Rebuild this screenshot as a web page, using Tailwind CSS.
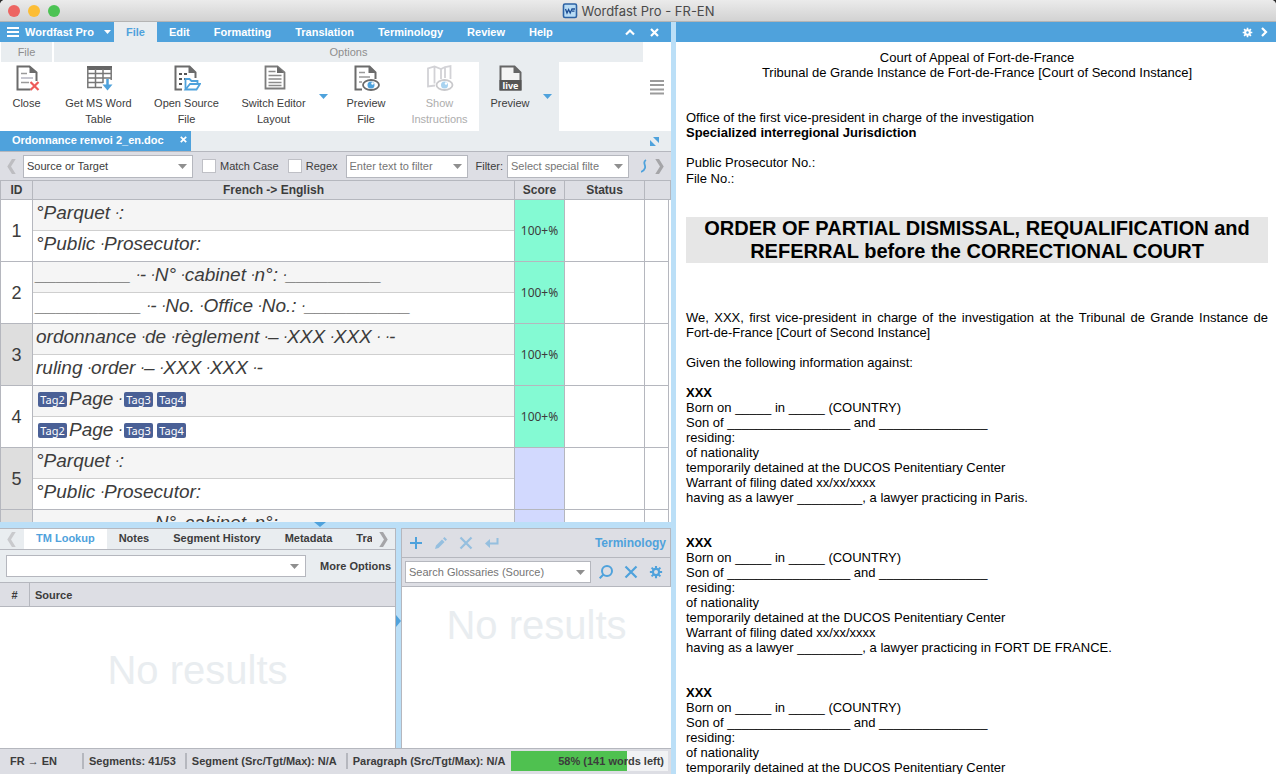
<!DOCTYPE html>
<html lang="en">
<head>
    <meta charset="UTF-8">
    <meta name="viewport" content="width=device-width, initial-scale=1.0">
    <title>Wordfast Pro - FR-EN</title>
    <script src="https://cdn.jsdelivr.net/npm/@tailwindcss/browser@4"></script>
</head>
<body class="bg-[#2b2b2b] font-['Liberation_Sans',Arial,sans-serif] text-[11px] leading-4 text-[#3c3c3c]">

    <!-- Shared shapes -->
    <svg class="hidden">
        <symbol id="arrow" viewBox="0 0 9 5"><path d="M0 0h9L4.500 5z" fill="currentColor"/></symbol>
        <symbol id="left" viewBox="0 0 9 16"><path d="M5 0h4L4 8l5 8H5L0 8z" fill="currentColor"/></symbol>
        <symbol id="right" viewBox="0 0 9 16"><path d="M4 0H0l5 8-5 8h4l5-8z" fill="currentColor"/></symbol>
        <symbol id="cross" viewBox="0 0 14 14"><path d="M1.500 1.500l11 11M12.500 1.500l-11 11" fill="none" stroke="currentColor" stroke-width="2.200"/></symbol>
        <symbol id="boldcross" viewBox="0 0 9 9"><path d="M1 1l7 7M8 1L1 8" fill="none" stroke="currentColor" stroke-width="2.200"/></symbol>
        <symbol id="gear" viewBox="0 0 16 16">
            <path d="M8 1v14M1 8h14M3 3l10 10M13 3L3 13" stroke="currentColor" stroke-width="2.400"/>
            <circle cx="8" cy="8" r="4.800" fill="currentColor"/>
        </symbol>
    </svg>

    <div class="flex h-screen flex-col overflow-hidden rounded-t-[5px] bg-white">

        <!-- Title bar -->
        <header class="relative flex h-[22px] shrink-0 items-center justify-center border-b border-[#b4b4b4] bg-linear-to-b from-[#ebebeb] to-[#d2d2d2]">
            <div class="absolute left-2 flex gap-2">
                <span class="size-3 rounded-full bg-[#ed6562]"></span>
                <span class="size-3 rounded-full bg-[#fcbd35]"></span>
                <span class="size-3 rounded-full bg-[#4cc354]"></span>
            </div>
            <svg class="mr-1 size-4" viewBox="0 0 16 16">
                <rect x="1.500" y="1" width="13" height="13.500" rx="1.500" fill="#b9dcf5" stroke="#2c62a4" stroke-width="1.600"/>
                <path d="M3.500 6l1.500 4 1.600-3.500L8.200 10 10 6h3M10 8.200h2.500" fill="none" stroke="#1e4e94" stroke-width="1.300"/>
            </svg>
            <h1 class="font-[Inter,sans-serif] text-[13px] text-[#4a4a4a]">Wordfast Pro - FR-EN</h1>
        </header>

        <main class="grid min-h-0 flex-1 grid-cols-[minmax(0,671fr)_5px_minmax(0,600fr)]">

            <!-- Editor side -->
            <div class="flex min-h-0 flex-col">

                <!-- Menu -->
                <nav class="flex h-5 shrink-0 items-stretch bg-[#4fa2dc] font-bold text-white">
                    <button class="flex w-[114px] items-center gap-[6px] pl-[7px] font-bold">
                        <svg class="h-[10px] w-3" viewBox="0 0 12 10"><path d="M0 1h12M0 5h12M0 9h12" stroke="#fff" stroke-width="2"/></svg>
                        Wordfast Pro
                        <svg class="ml-1 h-[4px] w-[7px]"><use href="#arrow"/></svg>
                    </button>
                    <button class="bg-[#e9edf0] px-3 font-bold text-[#4fa2dc]">File</button>
                    <button class="px-3 font-bold">Edit</button>
                    <button class="px-3 font-bold">Formatting</button>
                    <button class="px-3 font-bold">Translation</button>
                    <button class="px-3 font-bold">Terminology</button>
                    <button class="px-3 font-bold">Review</button>
                    <button class="px-3 font-bold">Help</button>
                    <button class="ml-auto" aria-label="Collapse ribbon">
                        <svg class="h-2 w-[10px]" viewBox="0 0 10 8"><path d="M1 6.500l4-4 4 4" fill="none" stroke="#fff" stroke-width="2.200"/></svg>
                    </button>
                    <button class="mr-3 ml-[15px]" aria-label="Close ribbon"><svg class="size-[9px]"><use href="#boldcross"/></svg></button>
                </nav>

                <!-- Ribbon -->
                <div class="flex h-[89px] shrink-0 justify-between">
                    <div class="flex h-full">
                        <section class="flex w-[54px] flex-col border-l border-white">
                            <h2 class="mr-[2px] h-5 bg-[#e9edf0] text-center leading-5 text-[#8e8e8e]">File</h2>
                            <button class="flex flex-1 flex-col items-center pt-[2px] pr-[2px]">
                                <svg class="mb-[3px] size-7" viewBox="0 0 28 28" fill="none">
                                    <path d="M17.500 25.500H4.500v-23h12l7 6V17" stroke="#6b6b6b" stroke-width="2"/>
                                    <path d="M16.500 2v7h7z" fill="#6b6b6b"/>
                                    <path d="M8 9.500h6M8 18.500h8" stroke="#9a9a9a" stroke-width="1.500"/>
                                    <path d="M8 14h12" stroke="#b5b5c0" stroke-width="1.500"/>
                                    <path d="M17.500 18l8 8M25.500 18l-8 8" stroke="#ee5b59" stroke-width="2.200"/>
                                </svg>
                                Close
                            </button>
                        </section>
                        <section class="flex flex-col">
                            <h2 class="h-5 bg-[#e9edf0] text-center leading-5 text-[#8e8e8e]">Options</h2>
                            <div class="flex flex-1 pr-[84px]">
                                <button class="flex w-[89px] flex-col items-center pt-[2px]">
                                    <svg class="mb-[3px] size-7" viewBox="0 0 28 28" fill="none">
                                        <path d="M2 4h25" stroke="#666" stroke-width="4"/>
                                        <path d="M2.800 4v19.500H17M26.200 4v12M10.500 5v18M18 5v14M3 9.500h23M3 14h23M3 18.500h15" stroke="#777" stroke-width="1.500"/>
                                        <path d="M22.500 15v8" stroke="#4fa2dc" stroke-width="2.500"/>
                                        <path d="M17.500 20.500h10l-5 6z" fill="#4fa2dc"/>
                                    </svg>
                                    Get MS Word<br>Table
                                </button>
                                <button class="flex w-[87px] flex-col items-center pt-[2px]">
                                    <svg class="mb-[3px] size-7" viewBox="0 0 28 28" fill="none">
                                        <path d="M9 25.500H2.500v-23h14l6 6V14" stroke="#6b6b6b" stroke-width="2"/>
                                        <path d="M15.500 2v7h7z" fill="#6b6b6b"/>
                                        <path d="M6 10h3M11 10h3M6 15h3M6 20h3M11 15h2" stroke="#555" stroke-width="1.800"/>
                                        <path d="M12.500 25.500V15h4l2 2h6v3" stroke="#4fa2dc" stroke-width="1.800"/>
                                        <path d="M12.500 25.500l4.500-5.500h10l-3.500 5.500z" fill="#fff" stroke="#4fa2dc" stroke-width="1.800"/>
                                    </svg>
                                    Open Source<br>File
                                </button>
                                <button class="flex w-[87px] flex-col items-center pt-[2px]">
                                    <svg class="mb-[3px] size-7" viewBox="0 0 28 28" fill="none">
                                        <path d="M5.500 24.500v-22h12l7 6v16z" stroke="#7c7c7c" stroke-width="1.800"/>
                                        <path d="M17 2v7h7z" fill="#6b6b6b"/>
                                        <path d="M8.500 7.500h7M8.500 11.500h13M8.500 15h13M8.500 18.500h13M8.500 21.500h13" stroke="#8b8b8b" stroke-width="1.500"/>
                                    </svg>
                                    Switch Editor<br>Layout
                                </button>
                                <button class="w-3" aria-label="More layouts"><svg class="mx-auto h-[5px] w-[9px] text-[#4fa2dc]"><use href="#arrow"/></svg></button>
                                <button class="flex w-[74px] flex-col items-center pt-[2px]">
                                    <svg class="mb-[3px] size-7" viewBox="0 0 28 28" fill="none">
                                        <path d="M10 25.500H3.500v-23h14l6 6V15" stroke="#6b6b6b" stroke-width="2"/>
                                        <path d="M16.500 2v7h7z" fill="#6b6b6b"/>
                                        <path d="M7 8.500h6M7 13h11M7 18h3" stroke="#9a9a9a" stroke-width="1.500"/>
                                        <ellipse cx="19" cy="21" rx="8" ry="5" fill="#fff" stroke="#6b6b6b" stroke-width="1.800"/>
                                        <circle cx="19" cy="21" r="3.500" fill="#4fa2dc"/><circle cx="20.500" cy="19.500" r="1.200" fill="#fff"/>
                                    </svg>
                                    Preview<br>File
                                </button>
                                <button class="flex w-[73px] flex-col items-center pt-[2px] text-[#adadad]" disabled>
                                    <svg class="mb-[3px] size-7" viewBox="0 0 28 28" fill="none">
                                        <path d="M9 21.500l-7 1v-18L8.500 2.500 15 5l4-2 5.500-1V15M8.500 2.500v17M15 5v10M19 3v11" stroke="#d2d2d6" stroke-width="1.800"/>
                                        <ellipse cx="18.500" cy="21" rx="8" ry="5" fill="#fff" stroke="#c9c9cc" stroke-width="1.800"/>
                                        <circle cx="18.500" cy="21" r="3.500" fill="#a9d3f0"/><circle cx="20" cy="19.500" r="1.200" fill="#fff"/>
                                    </svg>
                                    Show<br>Instructions
                                </button>
                                <div class="ml-[3px] flex w-20 bg-[#e9edf0]">
                                    <button class="flex w-[62px] flex-col items-center pt-[2px]">
                                        <svg class="mb-[3px] size-7" viewBox="0 0 28 28" fill="none">
                                            <path d="M4.500 25.500v-23h14l6 6v17z" fill="#f4f4f4" stroke="#666" stroke-width="2"/>
                                            <path d="M17.500 2v7h7z" fill="#666"/>
                                            <path d="M3.500 16h22v10.500h-22z" fill="#555"/>
                                            <text x="14.500" y="24.500" text-anchor="middle" fill="#fff" font-family="Noto Sans" font-size="9" font-weight="bold">live</text>
                                        </svg>
                                        Preview
                                    </button>
                                    <button class="w-3" aria-label="More previews"><svg class="mx-auto h-[5px] w-[9px] text-[#4fa2dc]"><use href="#arrow"/></svg></button>
                                </div>
                            </div>
                        </section>
                    </div>
                    <button class="mt-5 mr-[7px] self-start pt-[18px]" aria-label="Customize">
                        <svg class="h-[15px] w-[14px]" viewBox="0 0 14 15"><path d="M0 1h14M0 5h14M0 9.500h14M0 13.500h14" stroke="#9b9b9b" stroke-width="1.800"/></svg>
                    </button>
                </div>

                <!-- Open files -->
                <div class="flex h-5 shrink-0 items-center justify-between bg-[#e9edf0] pr-3">
                    <div class="flex h-full w-[191px] items-start justify-between bg-[#4fa2dc] pt-px pr-1 pl-3 font-bold text-white">
                        <span>Ordonnance renvoi 2_en.doc</span>
                        <button class="pt-[4px]" aria-label="Close file"><svg class="size-[7px]"><use href="#boldcross"/></svg></button>
                    </div>
                    <button aria-label="Expand">
                        <svg class="size-[9px]" viewBox="0 0 9 9" fill="#4fa2dc"><path d="M3 0h6v6zM0 3l6 6H0z"/></svg>
                    </button>
                </div>

                <!-- Filter bar -->
                <div class="flex h-[29px] shrink-0 items-center border-t border-[#b5b7be] bg-[#dddee4] pr-[7px] pl-[7px]">
                    <button class="mr-[7px] text-[#bdbdc1]" aria-label="Scroll left"><svg class="h-[15px] w-[9px]"><use href="#left"/></svg></button>
                    <div class="relative flex w-[170px] items-center">
                        <select aria-label="Search in" class="h-[23px] w-full appearance-none border border-[#b5b7be] bg-white pr-5 pl-[3px]"><option>Source or Target</option></select>
                        <svg class="pointer-events-none absolute right-[6px] h-[5px] w-[9px] text-[#8f8f8f]"><use href="#arrow"/></svg>
                    </div>
                    <input id="match" type="checkbox" class="ml-[9px] size-[14px] appearance-none border border-[#bfc0c6] bg-white">
                    <label for="match" class="ml-1">Match Case</label>
                    <input id="regex" type="checkbox" class="ml-[9px] size-[14px] appearance-none border border-[#bfc0c6] bg-white">
                    <label for="regex" class="ml-1">Regex</label>
                    <div class="relative ml-2 flex w-[122px] items-center">
                        <select aria-label="Text filter" class="h-[23px] w-full appearance-none border border-[#b5b7be] bg-white pr-5 pl-[3px] text-[#757575]"><option>Enter text to filter</option></select>
                        <svg class="pointer-events-none absolute right-[6px] h-[5px] w-[9px] text-[#8f8f8f]"><use href="#arrow"/></svg>
                    </div>
                    <label for="special" class="ml-2">Filter:</label>
                    <div class="relative ml-1 flex w-[122px] items-center">
                        <select id="special" class="h-[23px] w-full appearance-none border border-[#b5b7be] bg-white pr-6 pl-[3px] text-[#757575]"><option>Select special filte</option></select>
                        <svg class="pointer-events-none absolute right-[6px] h-[5px] w-[9px] text-[#8f8f8f]"><use href="#arrow"/></svg>
                    </div>
                    <svg class="ml-auto h-[14px] w-[6px]" viewBox="0 0 6 14" fill="none"><path d="M5 1C1 3 5 6 4 9c-.500 2-2 3-4 4" stroke="#4fa2dc" stroke-width="1.800"/></svg>
                    <button class="ml-2 text-[#a5a5a8]" aria-label="Scroll right"><svg class="h-[15px] w-[9px]"><use href="#right"/></svg></button>
                </div>

                <!-- Segments -->
                <div class="min-h-0 flex-1 overflow-hidden">
                    <table class="w-full table-fixed border-separate border-spacing-0">
                        <colgroup>
                            <col class="w-[33px]">
                            <col>
                            <col class="w-[50px]">
                            <col class="w-20">
                            <col class="w-6">
                            <col class="w-[2px]">
                        </colgroup>
                        <thead>
                            <tr class="h-5 bg-[#dddee4] text-[12px]">
                                <th class="border border-[#b5b7be] p-0">ID</th>
                                <th class="border-y border-r border-[#b5b7be] p-0">French -&gt; English</th>
                                <th class="border-y border-r border-[#b5b7be] p-0">Score</th>
                                <th class="border-y border-r border-[#b5b7be] p-0">Status</th>
                                <th class="border-y border-r border-[#b5b7be] p-0" colspan="2"></th>
                            </tr>
                        </thead>
                        <tbody id="segments"></tbody>
                    </table>
                </div>

                <!-- Splitter -->
                <div class="flex h-[6px] shrink-0 justify-center bg-[#bbdff7] pr-8">
                    <svg class="h-[5px] w-3 text-[#4fa2dc]" viewBox="0 0 12 5"><path d="M0 0h12L6 5z" fill="currentColor"/></svg>
                </div>

                <!-- Lower panels -->
                <div class="grid h-[220px] shrink-0 grid-cols-[minmax(0,396fr)_5px_minmax(0,270fr)]">

                    <!-- TM Lookup -->
                    <section class="flex flex-col border-t border-r border-[#b5b7be]">
                        <div class="flex h-[21px] items-stretch border-b border-[#b5b7be] bg-[#e9edf0] pr-[7px] pl-[7px] font-bold">
                            <button class="mr-2 text-[#c9cacd]" aria-label="Previous tab"><svg class="h-[15px] w-[9px]"><use href="#left"/></svg></button>
                            <div class="flex min-w-0 flex-1 items-stretch overflow-hidden whitespace-nowrap">
                                <button class="bg-white px-3 pb-[2px] font-bold text-[#4fa2dc]">TM Lookup</button>
                                <button class="px-3 pb-[2px] font-bold">Notes</button>
                                <button class="px-3 pb-[2px] font-bold">Segment History</button>
                                <button class="px-3 pb-[2px] font-bold">Metadata</button>
                                <button class="pb-[2px] pl-3 font-bold">Tra</button>
                            </div>
                            <button class="ml-[7px] text-[#a5a5a8]" aria-label="Next tab"><svg class="h-[15px] w-[9px]"><use href="#right"/></svg></button>
                        </div>
                        <div class="flex h-[33px] items-center border-b border-[#b5b7be] bg-[#e9edf0] pr-1 pl-[6px]">
                            <div class="relative flex flex-1 items-center">
                                <select aria-label="TM search" class="h-[22px] w-full appearance-none border border-[#b5b7be] bg-white"><option></option></select>
                                <svg class="pointer-events-none absolute right-[7px] h-[5px] w-[9px] text-[#8f8f8f]"><use href="#arrow"/></svg>
                            </div>
                            <button class="ml-[14px] font-bold">More Options</button>
                        </div>
                        <table class="w-full table-fixed border-separate border-spacing-0">
                            <thead>
                                <tr class="h-6 bg-[#dddee4]">
                                    <th class="w-[30px] border-r border-b border-[#b5b7be] p-0">#</th>
                                    <th class="border-b border-[#b5b7be] p-0 pl-[5px] text-left">Source</th>
                                </tr>
                            </thead>
                        </table>
                        <p class="flex flex-1 items-center justify-center pb-4 text-[40px] text-[#e9edf0]">No results</p>
                    </section>

                    <!-- Splitter -->
                    <div class="bg-[#bbdff7] pt-[87px]">
                        <svg class="h-3 w-[5px]" viewBox="0 0 5 12"><path d="M0 0v12l5-6z" fill="#4fa2dc"/></svg>
                    </div>

                    <!-- Terminology -->
                    <section class="flex flex-col border-t border-l border-[#b5b7be]">
                        <div class="flex h-[29px] items-center border-r border-b border-[#b5b7be] bg-[#dddee4] pr-1 pl-2 text-[#4fa2dc]">
                            <button aria-label="Add term"><svg class="size-3" viewBox="0 0 12 12"><path d="M6 0v12M0 6h12" stroke="currentColor" stroke-width="2"/></svg></button>
                            <button class="ml-[13px] opacity-50" aria-label="Edit term"><svg class="size-3" viewBox="0 0 12 12" fill="currentColor"><path d="M0 12l1-3.500 6-6L9.500 5l-6 6zM8 1.500L9.500 0 12 2.500 10.500 4z"/></svg></button>
                            <button class="ml-3 opacity-50" aria-label="Delete term"><svg class="size-[14px]"><use href="#cross"/></svg></button>
                            <button class="ml-3 opacity-50" aria-label="Insert term"><svg class="h-3 w-[14px]" viewBox="0 0 14 12"><path d="M12.500 1v5.500H3" fill="none" stroke="currentColor" stroke-width="2"/><path d="M0 6.500L5 2v9z" fill="currentColor"/></svg></button>
                            <h2 class="ml-auto text-[12px] font-bold">Terminology</h2>
                        </div>
                        <div class="flex h-[29px] items-center border-r border-b border-[#b5b7be] bg-[#dddee4] pr-[7px] pl-[3px] text-[#4fa2dc]">
                            <div class="relative flex min-w-0 flex-1 items-center">
                                <select aria-label="Search glossaries" class="h-[22px] w-full appearance-none border border-[#b5b7be] bg-white pr-5 pl-[3px] text-[#757575]"><option>Search Glossaries (Source)</option></select>
                                <svg class="pointer-events-none absolute right-[6px] h-[5px] w-[9px] text-[#8f8f8f]"><use href="#arrow"/></svg>
                            </div>
                            <button class="ml-2" aria-label="Search"><svg class="size-[14px]" viewBox="0 0 14 14" fill="none" stroke="currentColor" stroke-width="2"><circle cx="8" cy="6" r="5"/><path d="M4.500 9.500L.700 13.300"/></svg></button>
                            <button class="ml-[11px]" aria-label="Clear"><svg class="size-[14px]"><use href="#cross"/></svg></button>
                            <button class="ml-[11px]" aria-label="Glossary settings">
                                <svg class="size-[14px]" viewBox="0 0 16 16"><use href="#gear"/><circle cx="8" cy="8" r="2.300" fill="#dddee4"/></svg>
                            </button>
                        </div>
                        <p class="flex flex-1 items-start justify-center pt-[30px] text-[40px] text-[#e9edf0]">No results</p>
                    </section>
                </div>

                <!-- Status bar -->
                <footer class="flex h-[26px] shrink-0 items-center border-t border-[#b5b7be] bg-[#dddee4] pr-[3px] pb-px pl-[10px] font-bold whitespace-nowrap">
                    <span class="w-[72px]">FR → EN</span>
                    <span class="border-l-2 border-[#b5b7be] pr-[9px] pl-[5px]">Segments: 41/53</span>
                    <span class="border-l-2 border-[#b5b7be] pr-[9px] pl-[5px]">Segment (Src/Tgt/Max): N/A</span>
                    <span class="border-l-2 border-[#b5b7be] pr-[5px] pl-[5px]">Paragraph (Src/Tgt/Max): N/A</span>
                    <div class="relative h-5 flex-1 bg-[#f1f2f4] pr-1 text-right leading-5">
                        <div class="absolute inset-y-0 left-0 bg-[#4fc150]" style="width: 74%"></div>
                        <span class="relative">58% (141 words left)</span>
                    </div>
                </footer>
            </div>

            <div class="bg-[#bbdff7]"></div>

            <!-- Live preview -->
            <div class="flex min-h-0 flex-col">
                <div class="flex h-5 shrink-0 items-center justify-end gap-2 bg-[#4fa2dc] pr-2 text-white">
                    <button aria-label="Preview settings"><svg class="size-[11px]" viewBox="0 0 16 16"><use href="#gear"/><circle cx="8" cy="8" r="1.800" fill="#4fa2dc"/></svg></button>
                    <button aria-label="Hide preview"><svg class="h-[10px] w-[7px]" viewBox="0 0 7 10"><path d="M1 1l4 4-4 4" fill="none" stroke="#fff" stroke-width="2.200"/></svg></button>
                </div>
                <article class="min-h-0 flex-1 overflow-hidden pt-2 pr-2 pl-[10px] text-[13px] leading-[15px] text-black">
                    <p class="text-center">Court of Appeal of Fort-de-France<br>Tribunal de Grande Instance de Fort-de-France [Court of Second Instance]</p>
                    <p class="mt-[30px]">Office of the first vice-president in charge of the investigation<br><b>Specialized interregional Jurisdiction</b></p>
                    <p class="mt-[15px]">Public Prosecutor No.:</p>
                    <p class="mt-px">File No.:</p>
                    <h2 class="mt-[31px] bg-[#e6e6e6] px-3 text-center text-[20px] leading-[23px] font-bold">ORDER OF PARTIAL DISMISSAL, REQUALIFICATION and REFERRAL before the CORRECTIONAL COURT</h2>
                    <p class="mt-[47px] text-justify">We, XXX, first vice-president in charge of the investigation at the Tribunal de Grande Instance de Fort-de-France [Court of Second Instance]</p>
                    <p class="mt-[15px]">Given the following information against:</p>
                    <p class="mt-[15px]"><b>XXX</b><br>Born on _____ in _____ (COUNTRY)<br>Son of _________________ and _______________<br>residing:<br>of nationality<br>temporarily detained at the DUCOS Penitentiary Center<br>Warrant of filing dated xx/xx/xxxx<br>having as a lawyer _________, a lawyer practicing in Paris.</p>
                    <p class="mt-[30px]"><b>XXX</b><br>Born on _____ in _____ (COUNTRY)<br>Son of _________________ and _______________<br>residing:<br>of nationality<br>temporarily detained at the DUCOS Penitentiary Center<br>Warrant of filing dated xx/xx/xxxx<br>having as a lawyer _________, a lawyer practicing in FORT DE FRANCE.</p>
                    <p class="mt-[30px]"><b>XXX</b><br>Born on _____ in _____ (COUNTRY)<br>Son of _________________ and _______________<br>residing:<br>of nationality<br>temporarily detained at the DUCOS Penitentiary Center</p>
                </article>
            </div>
        </main>
    </div>

    <script>
        // [source, target, score, id cell shaded]
        const segments = [
            ['°Parquet ·:', '°Public ·Prosecutor:', '100+%', false],
            ['_________ ·- ·N° ·cabinet ·n°: ·_________', '__________ ·- ·No. ·Office ·No.: ·__________', '100+%', false],
            ['ordonnance ·de ·règlement ·– ·XXX ·XXX · ·-', 'ruling ·order ·– ·XXX ·XXX ·-', '100+%', true],
            ['[Tag2]Page ·[Tag3][Tag4]', '[Tag2]Page ·[Tag3][Tag4]', '100+%', false],
            ['°Parquet ·:', '°Public ·Prosecutor:', '', true],
            ['_________ ·- ·N° ·cabinet ·n°: ·_________', '', '', true]
        ];

        // Tags first, the markup of the space marks has brackets of its own
        const format = text => text
            .replace(/\[(\w+)\]/g, '<span class="mx-[2px] inline-block h-[15px] w-[29px] rounded-xs bg-[#4a6096] text-center align-middle font-[Noto_Sans,sans-serif] text-[11px] leading-[15px] text-white not-italic">$1</span>')
            .replace(/·/g, '<span class="align-middle text-[10px] leading-none font-bold">·</span>');

        document.getElementById('segments').innerHTML = segments.map(([source, target, score, shaded], i) => `
            <tr>
                <td class="border-x border-b border-[#b5b7be] p-0 text-center text-[18px] ${shaded ? 'bg-[#dedede]' : 'bg-white'}">${i + 1}</td>
                <td class="border-r border-b border-[#b5b7be] p-0 text-[19px] leading-[25px] whitespace-nowrap italic">
                    <div class="h-[31px] overflow-hidden border-b border-[#cfcfcf] bg-[#f5f5f5] px-[3px]">${format(source)}</div>
                    <div class="h-[30px] overflow-hidden px-[3px]">${format(target)}</div>
                </td>
                <td class="border-r border-b border-[#b5b7be] p-0 text-center font-[Noto_Sans,sans-serif] text-[12px] ${score ? 'bg-[#84fad3]' : 'bg-[#d2d9fe]'}">${score}</td>
                <td class="border-r border-b border-[#b5b7be] p-0"></td>
                <td class="border-r border-b border-[#b5b7be] p-0"></td>
                <td class="p-0"></td>
            </tr>`).join('');
    </script>
</body>
</html>
